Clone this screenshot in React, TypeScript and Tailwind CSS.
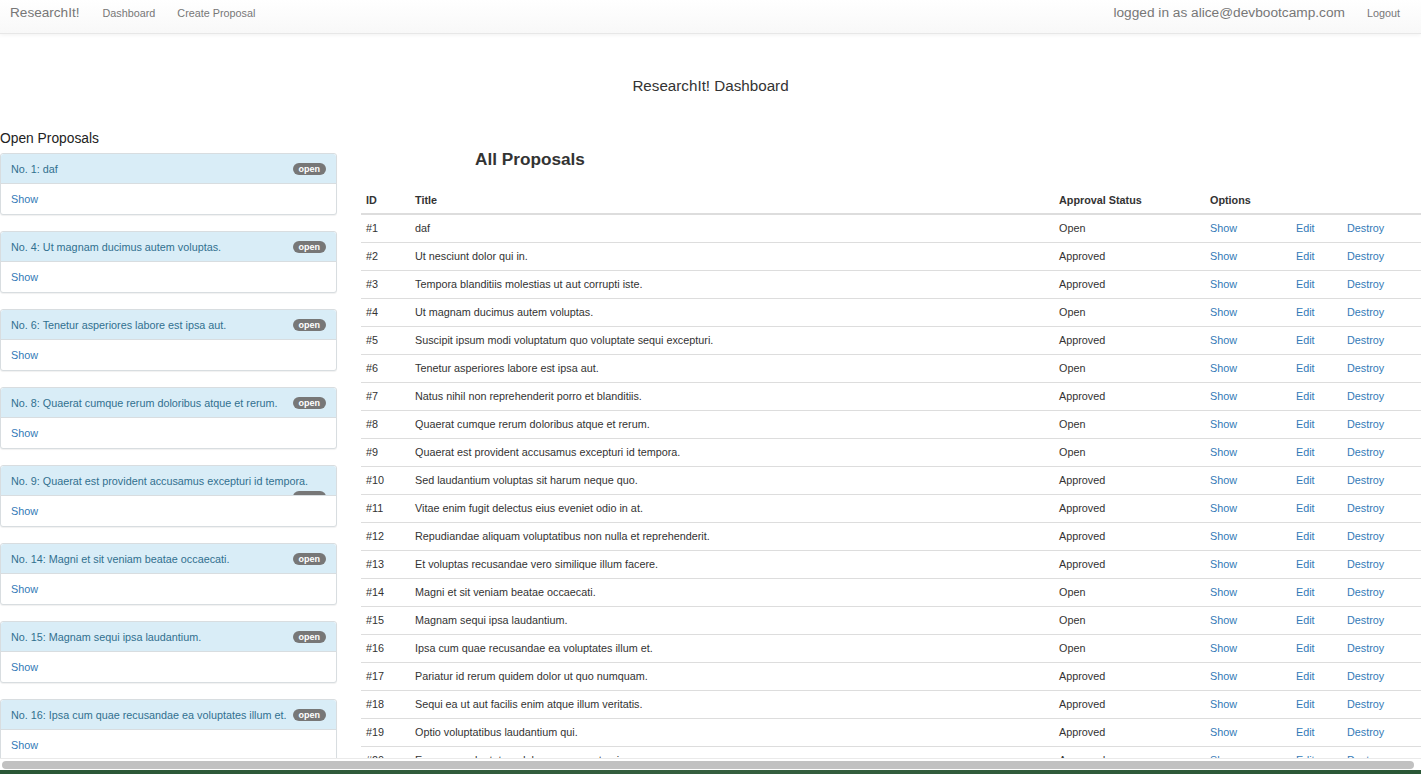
type Proposal = { id: number; title: string; status: 'Open' | 'Approved' };

const proposals: Proposal[] = [
  { id: 1, title: 'daf', status: 'Open' },
  { id: 2, title: 'Ut nesciunt dolor qui in.', status: 'Approved' },
  { id: 3, title: 'Tempora blanditiis molestias ut aut corrupti iste.', status: 'Approved' },
  { id: 4, title: 'Ut magnam ducimus autem voluptas.', status: 'Open' },
  { id: 5, title: 'Suscipit ipsum modi voluptatum quo voluptate sequi excepturi.', status: 'Approved' },
  { id: 6, title: 'Tenetur asperiores labore est ipsa aut.', status: 'Open' },
  { id: 7, title: 'Natus nihil non reprehenderit porro et blanditiis.', status: 'Approved' },
  { id: 8, title: 'Quaerat cumque rerum doloribus atque et rerum.', status: 'Open' },
  { id: 9, title: 'Quaerat est provident accusamus excepturi id tempora.', status: 'Open' },
  { id: 10, title: 'Sed laudantium voluptas sit harum neque quo.', status: 'Approved' },
  { id: 11, title: 'Vitae enim fugit delectus eius eveniet odio in at.', status: 'Approved' },
  { id: 12, title: 'Repudiandae aliquam voluptatibus non nulla et reprehenderit.', status: 'Approved' },
  { id: 13, title: 'Et voluptas recusandae vero similique illum facere.', status: 'Approved' },
  { id: 14, title: 'Magni et sit veniam beatae occaecati.', status: 'Open' },
  { id: 15, title: 'Magnam sequi ipsa laudantium.', status: 'Open' },
  { id: 16, title: 'Ipsa cum quae recusandae ea voluptates illum et.', status: 'Open' },
  { id: 17, title: 'Pariatur id rerum quidem dolor ut quo numquam.', status: 'Approved' },
  { id: 18, title: 'Sequi ea ut aut facilis enim atque illum veritatis.', status: 'Approved' },
  { id: 19, title: 'Optio voluptatibus laudantium qui.', status: 'Approved' },
  { id: 20, title: 'Eos quae voluptatem dolorem rerum et quia.', status: 'Approved' },
  { id: 21, title: 'Rerum nihil eos quia ut dolorem.', status: 'Approved' },
];

const font = { fontFamily: '"Liberation Sans", Arial, Helvetica, sans-serif' };

function Navbar() {
  return (
    <div className="h-[34px] shrink-0 flex items-start bg-gradient-to-b from-white to-[#f8f8f8] border-b border-[#e7e7e7] shadow-[0_1px_4px_rgba(0,0,0,0.06)]">
      <div className="flex items-center h-[27px] w-full">
        <a className="ml-[10px] text-[13.6px] text-[#777]">ResearchIt!</a>
        <a className="ml-[23px] text-[10.8px] text-[#777]">Dashboard</a>
        <a className="ml-[22px] text-[10.8px] text-[#777]">Create Proposal</a>
        <span className="ml-auto text-[13.7px] text-[#777]">logged in as alice@devbootcamp.com</span>
        <a className="ml-[22px] mr-[21px] text-[10.8px] text-[#777]">Logout</a>
      </div>
    </div>
  );
}

function OpenPanel({ p }: { p: Proposal }) {
  return (
    <div className="mb-[16px] border border-[#d8dde0] rounded-[3px] bg-white shadow-[0_1px_1px_rgba(0,0,0,0.06)]">
      <div className="h-[30px] overflow-hidden bg-[#d9edf7] border-b border-[#d8dde0] rounded-t-[3px] px-[10px] pt-[7px] flex flex-wrap items-start">
        <span className="text-[10.8px] leading-[16px] text-[#31708f]">
          No. {p.id}: {p.title}
        </span>
        <span className="ml-auto mt-[2px] rounded-full bg-[#777] px-[6px] h-[12px] leading-[12px] text-[9px] font-bold text-white">
          open
        </span>
      </div>
      <div className="h-[30px] px-[10px] flex items-center">
        <a className="text-[10.8px] text-[#337ab7]">Show</a>
      </div>
    </div>
  );
}

function ProposalsTable() {
  return (
    <table className="w-full border-collapse text-[10.8px] text-[#333]">
      <thead>
        <tr className="h-[28px] border-b-2 border-[#ddd] text-left">
          <th className="w-[49px] pl-[5px] pt-[2px] font-bold">ID</th>
          <th className="w-[644px] pl-[5px] pt-[2px] font-bold">Title</th>
          <th className="w-[151px] pl-[5px] pt-[2px] font-bold">Approval Status</th>
          <th className="w-[86px] pl-[5px] pt-[2px] font-bold">Options</th>
          <th className="w-[51px]"></th>
          <th></th>
        </tr>
      </thead>
      <tbody>
        {proposals.map((p) => (
          <tr key={p.id} className="h-[28px] border-b border-[#ddd]">
            <td className="pl-[5px]">#{p.id}</td>
            <td className="pl-[5px]">{p.title}</td>
            <td className="pl-[5px]">{p.status}</td>
            <td className="pl-[5px] text-[#337ab7]">Show</td>
            <td className="pl-[5px] text-[#337ab7]">Edit</td>
            <td className="pl-[5px] text-[#337ab7]">Destroy</td>
          </tr>
        ))}
      </tbody>
    </table>
  );
}

export default function App() {
  const openOnes = proposals.filter((p) => p.status === 'Open');
  return (
    <div className="h-[774px] w-[1421px] flex flex-col overflow-hidden bg-white text-[#333]" style={font}>
      <div className="h-[758px] shrink-0 overflow-hidden flex flex-col">
        <Navbar />
        <h1 className="mt-[42px] text-center text-[15.2px] leading-[20px] font-normal text-[#333]">ResearchIt! Dashboard</h1>
        <div className="mt-[24px] flex gap-[24px] items-start">
          <div className="w-[337px] shrink-0">
            <h3 className="pt-[10px] pb-[5px] text-[13.8px] leading-[18px] font-normal text-[#222]">Open Proposals</h3>
            {openOnes.map((p) => (
              <OpenPanel key={p.id} p={p} />
            ))}
          </div>
          <div className="flex-1 min-w-0">
            <h2 className="mt-[28px] mb-[16px] pl-[114px] text-[17.2px] leading-[22px] font-bold text-[#333]">All Proposals</h2>
            <ProposalsTable />
          </div>
        </div>
      </div>
      <div className="h-[12px] shrink-0 bg-white border-t border-[#eaeaea] px-[2px] pt-[2px]">
        <div className="h-[8px] w-[1412px] rounded-full bg-[#c1c1c1]" />
      </div>
      <div className="flex-1 bg-gradient-to-r from-[#2a5736] via-[#355f3f] to-[#2a5736]" />
    </div>
  );
}
